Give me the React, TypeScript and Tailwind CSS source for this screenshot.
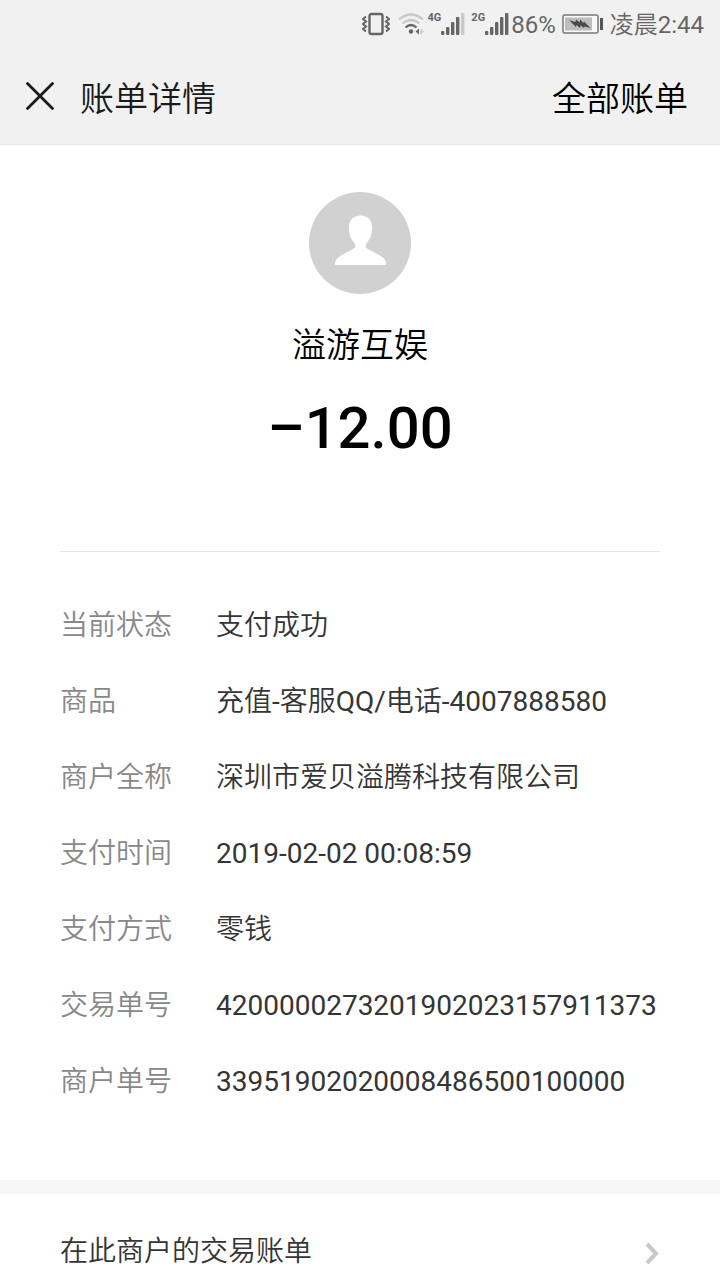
import React from 'react';

interface DetailRow {
  label: string;
  value: string;
}

const rows: DetailRow[] = [
  { label: '当前状态', value: '支付成功' },
  { label: '商品', value: '充值-客服QQ/电话-4007888580' },
  { label: '商户全称', value: '深圳市爱贝溢腾科技有限公司' },
  { label: '支付时间', value: '2019-02-02 00:08:59' },
  { label: '支付方式', value: '零钱' },
  { label: '交易单号', value: '4200000273201902023157911373' },
  { label: '商户单号', value: '33951902020008486500100000' },
];

const VibrateIcon = () => (
  <svg width="28" height="24" viewBox="0 0 28 24" fill="none" stroke="#666666" strokeWidth="2">
    <rect x="7.5" y="2" width="13" height="20" rx="2" strokeWidth="2.4" />
    <path d="M4 4.5L1 7l3 2.5L1 12l3 2.5L1 17l3 2.5" />
    <path d="M24 4.5L27 7l-3 2.5L27 12l-3 2.5L27 17l-3 2.5" />
  </svg>
);

const WifiIcon = () => (
  <svg width="26" height="22" viewBox="0 0 26 22" fill="none" strokeWidth="2.2">
    <path d="M1 6.5Q13 -3.5 25 6.5" stroke="#c8c8c8" />
    <path d="M4.5 10.5Q13 3.5 21.5 10.5" stroke="#c8c8c8" />
    <path d="M7.5 14.5Q13 9.5 18.5 14.5" stroke="#666666" />
    <circle cx="13" cy="18.5" r="2.2" fill="#666666" />
    <path d="M21 15.5v6l-3.5-3z" fill="#666666" />
    <path d="M22.5 15.5v6l3.5-3z" fill="#c8c8c8" />
  </svg>
);

const SignalIcon = ({ last }: { last: string }) => (
  <svg width="24" height="24" viewBox="0 0 24 24" fill="#666666">
    <rect x="0" y="19" width="3.4" height="4" rx="1" />
    <rect x="5" y="15" width="3.4" height="8" rx="1" />
    <rect x="10" y="10" width="3.4" height="13" rx="1" />
    <rect x="15" y="5" width="3.4" height="18" rx="1" />
    <rect x="20" y="1" width="3.4" height="22" rx="1" fill={last} />
  </svg>
);

const BatteryIcon = () => (
  <svg width="42" height="20" viewBox="0 0 42 20" fill="none">
    <rect x="1" y="1" width="35" height="18" rx="2" fill="#f8f8f8" stroke="#777777" strokeWidth="1.5" />
    <rect x="3" y="3.5" width="27" height="13" fill="#bdbdbd" />
    <path d="M7 6l6.5 2 .5-2.500 3.500 3 .5-3 3.500 3.500.5-1.500 6.500 6.500-6-1.500-.5 1.500-3.500-2.500-.5 2.500-3.500-3-.5 2z" fill="#4a4a4a" />
    <rect x="38" y="4" width="3" height="12" fill="#555555" />
  </svg>
);

const NetworkLabel = ({ children }: { children: string }) => (
  <span className="self-start pt-3 text-[11px] leading-3 font-bold">{children}</span>
);

const StatusBar = () => (
  <div className="flex h-12 items-center justify-end pr-4 text-2xl text-[#666666]">
    <VibrateIcon />
    <span className="mr-1 ml-2">
      <WifiIcon />
    </span>
    <NetworkLabel>4G</NetworkLabel>
    <span className="mr-1.5">
      <SignalIcon last="#c8c8c8" />
    </span>
    <NetworkLabel>2G</NetworkLabel>
    <SignalIcon last="#666666" />
    <span className="ml-0.5 pt-0.5">86%</span>
    <span className="mx-1.5">
      <BatteryIcon />
    </span>
    <span className="pt-0.5">凌晨2:44</span>
  </div>
);

const App: React.FC = () => {
  return (
    <div className="min-h-screen bg-white font-[Roboto,'Noto_Sans_CJK_SC_DemiLight','Noto_Sans_CJK_SC',sans-serif] [&_svg]:block">
      {/* Header */}
      <header className="border-b border-[#e8e8e8] bg-[#f1f1f1]">
        <StatusBar />
        <div className="flex h-24 items-center justify-between pr-8 pl-6 text-[34px]">
          <div className="flex items-center gap-6">
            <button type="button" aria-label="关闭">
              <svg width="32" height="32" viewBox="0 0 32 32" stroke="#1a1a1a" strokeWidth="2.8" strokeLinecap="round">
                <path d="M3.5 3.5l25 25M28.5 3.5l-25 25" />
              </svg>
            </button>
            <h1 className="pt-1.5 text-[#1a1a1a]">账单详情</h1>
          </div>
          <a href="#bills" className="pt-1.5 text-black">全部账单</a>
        </div>
      </header>

      <main>
        {/* Merchant and amount */}
        <section className="mx-15 flex flex-col items-center border-b border-[#e5e5e5] pt-[47px] pb-[90px]">
          <svg width="102" height="102" viewBox="0 0 102 102">
            <circle cx="51" cy="51" r="51" fill="#d1d1d1" />
            <path
              d="M51.5 23.5C44 23.5 40 28.5 40 35c0 7 1 11 5 15.5C47 53 47 55.5 44 57C37 61 30 64 28 66.5C26 69 26 71 26 72q0 1 1 1H76q1 0 1-1C77 71 77 69 75 66.5C73 64 66 61 59 57C56 55.5 56 53 58 50.5C62 46 63 42 63 35C63 28.5 59 23.5 51.5 23.5z"
              fill="#ffffff"
            />
          </svg>
          <h2 className="mt-[26px] text-[34px] leading-[50px] text-black">溢游互娱</h2>
          <p className="mt-[25px] text-[58px] leading-[66px] font-medium text-black">–12.00</p>
        </section>

        {/* Payment details */}
        <dl className="flex flex-col gap-9 px-15 pt-[54px] pb-[78px] text-[28px] leading-10">
          {rows.map((row) => (
            <div key={row.label} className="flex">
              <dt className="w-39 shrink-0 text-[#888888]">{row.label}</dt>
              <dd className="text-[#353535]">{row.value}</dd>
            </div>
          ))}
        </dl>

        {/* Merchant history */}
        <a
          href="#merchant"
          className="flex items-center justify-between border-t-14 border-[#f7f7f7] px-15 pt-[38px] pb-2 text-[28px] leading-10 text-[#353535]"
        >
          在此商户的交易账单
          <svg width="16" height="28" viewBox="0 0 16 28" fill="none" stroke="#c8c8cd" strokeWidth="4">
            <path d="M3 6l9 9.5-9 9.5" />
          </svg>
        </a>
      </main>
    </div>
  );
};

export default App;
